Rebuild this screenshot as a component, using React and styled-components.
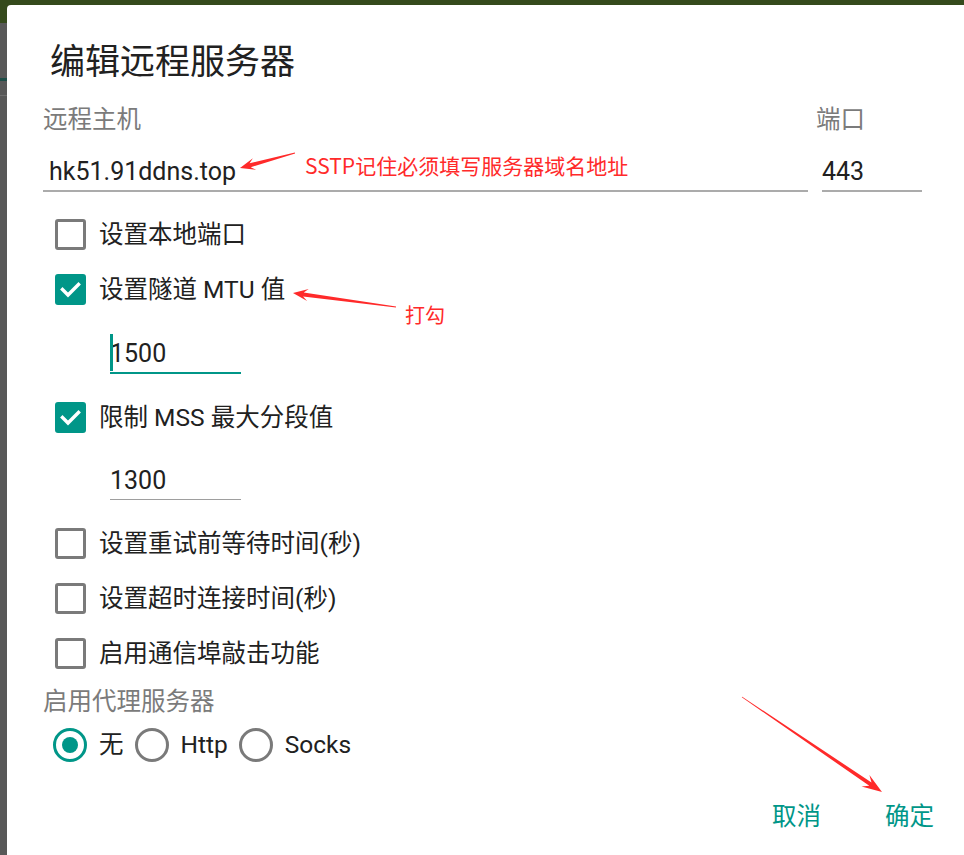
import React from 'react';
import styled, { createGlobalStyle } from 'styled-components';

const TEAL = '#009688';
const RED = '#ff2a2a';

const GlobalStyle = createGlobalStyle`
  html, body {
    margin: 0;
    padding: 0;
  }
  body {
    font-family: Roboto, "Noto Sans CJK SC", sans-serif;
    color: #212121;
  }
`;

// tapered "snipping tool" arrow, tail -> tip
function arrowPoints([tx, ty], [px, py], head = 16, wing = 6.5, neck = 2) {
  const dx = px - tx;
  const dy = py - ty;
  const len = Math.hypot(dx, dy);
  const ux = dx / len;
  const uy = dy / len;
  const nx = -uy;
  const ny = ux;
  const at = (d, w) => [px - ux * d + nx * w, py - uy * d + ny * w];
  const pts = [
    [tx + nx * 0.4, ty + ny * 0.4],
    at(head * 0.7, neck),
    at(head, wing),
    [px, py],
    at(head, -wing),
    at(head * 0.7, -neck),
    [tx - nx * 0.4, ty - ny * 0.4],
  ];
  return pts.map((p) => p.map((v) => v.toFixed(1)).join(',')).join(' ');
}

const arrows = [
  { from: [295, 153], to: [240, 168], head: 15, wing: 6 },
  { from: [396, 307], to: [293, 293], head: 15, wing: 6 },
  { from: [742, 697], to: [882, 792], head: 20, wing: 7 },
];

const checks = [
  { label: '设置本地端口', checked: false },
  { label: '设置隧道 MTU 值', checked: true, value: '1500', focused: true },
  { label: '限制 MSS 最大分段值', checked: true, value: '1300' },
  { label: '设置重试前等待时间(秒)', checked: false },
  { label: '设置超时连接时间(秒)', checked: false },
  { label: '启用通信埠敲击功能', checked: false },
];

const proxies = ['无', 'Http', 'Socks'];

function CheckMark() {
  return (
    <svg width="25" height="25" viewBox="0 0 25 25">
      <path d="M4.5 12.5 L10 18 L20.5 7.5" fill="none" stroke="#fff" strokeWidth="3.4" strokeLinecap="square" />
    </svg>
  );
}

export default function App() {
  return (
    <Page>
      <GlobalStyle />
      <Dialog>
        <Title>编辑远程服务器</Title>

        <HostRow>
          <Field>
            <FieldLabel>远程主机</FieldLabel>
            <FieldValue>hk51.91ddns.top</FieldValue>
          </Field>
          <Field>
            <FieldLabel>端口</FieldLabel>
            <FieldValue $inset>443</FieldValue>
          </Field>
        </HostRow>

        <CheckList>
          {checks.map((c) => (
            <React.Fragment key={c.label}>
              <CheckRow>
                <CheckBox $checked={c.checked}>{c.checked && <CheckMark />}</CheckBox>
                <RowLabel>{c.label}</RowLabel>
              </CheckRow>
              {c.value && (
                <SubInput $focused={c.focused}>
                  {c.focused && <Caret />}
                  {c.value}
                </SubInput>
              )}
            </React.Fragment>
          ))}
        </CheckList>

        <ProxyLabel>启用代理服务器</ProxyLabel>
        <RadioRow>
          {proxies.map((p, i) => (
            <RadioOption key={p}>
              <Radio $checked={i === 0} />
              <RowLabel>{p}</RowLabel>
            </RadioOption>
          ))}
        </RadioRow>

        <Actions>
          <ActionButton>取消</ActionButton>
          <ActionButton>确定</ActionButton>
        </Actions>
      </Dialog>

      <Note $x={305} $y={153} $size={21}>SSTP记住必须填写服务器域名地址</Note>
      <Note $x={405} $y={303} $size={20}>打勾</Note>
      <ArrowLayer width="964" height="855" viewBox="0 0 964 855">
        {arrows.map((a, i) => (
          <polygon key={i} points={arrowPoints(a.from, a.to, a.head, a.wing)} fill={RED} />
        ))}
      </ArrowLayer>
    </Page>
  );
}

const Page = styled.div`
  position: relative;
  width: 964px;
  height: 855px;
  overflow: hidden;
  background:
    linear-gradient(#354a1c, #354a1c) 0 0 / 100% 23px no-repeat,
    linear-gradient(#1d4d47, #1d4d47) 0 78px / 100% 3px no-repeat,
    linear-gradient(#6e6e6e, #6e6e6e) 0 95px / 100% 1px no-repeat,
    #585858;
`;

const Dialog = styled.div`
  box-sizing: border-box;
  margin: 5px 0 0 7px;
  height: 850px;
  padding: 0 30px 0 36px;
  background: #fff;
  border-top-left-radius: 4px;
  display: flex;
  flex-direction: column;
`;

const Title = styled.h1`
  margin: 36px 0 0;
  padding-left: 7px;
  font-size: 35px;
  line-height: 44px;
  font-weight: 400;
  color: #212121;
`;

const HostRow = styled.div`
  display: grid;
  grid-template-columns: 765px 106px;
  column-gap: 8px;
  margin-top: 20px;
`;

const Field = styled.div`
  display: flex;
  flex-direction: column;
`;

const FieldLabel = styled.div`
  font-size: 24.5px;
  line-height: 30px;
  color: #7b7b7b;
`;

const FieldValue = styled.div`
  margin-top: 19px;
  margin-left: ${(p) => (p.$inset ? '6px' : '0')};
  padding-left: ${(p) => (p.$inset ? '0' : '6px')};
  font-size: 25px;
  line-height: 36px;
  color: #212121;
  border-bottom: 2px solid #ababab;
`;

const CheckList = styled.div`
  display: flex;
  flex-direction: column;
  margin-top: 15px;
`;

const CheckRow = styled.div`
  display: flex;
  align-items: center;
  gap: 13px;
  height: 55px;
  padding-left: 12px;
`;

const CheckBox = styled.span`
  box-sizing: border-box;
  width: 31px;
  height: 31px;
  flex: none;
  display: flex;
  align-items: center;
  justify-content: center;
  border-radius: 3px;
  border: 3px solid ${(p) => (p.$checked ? TEAL : '#7a7a7a')};
  background: ${(p) => (p.$checked ? TEAL : 'transparent')};
`;

const RowLabel = styled.span`
  font-size: 24.5px;
  line-height: 30px;
  color: #212121;
`;

const SubInput = styled.div`
  position: relative;
  width: 131px;
  margin: ${(p) => (p.$focused ? '19px 0 16px 67px' : '18px 0 16px 67px')};
  font-size: 25px;
  line-height: 36px;
  color: #212121;
  border-bottom: ${(p) => (p.$focused ? `2px solid ${TEAL}` : '1.5px solid #9e9e9e')};
`;

const Caret = styled.span`
  position: absolute;
  left: 0;
  top: -2px;
  width: 3px;
  height: 37px;
  background: ${TEAL};
`;

const ProxyLabel = styled.div`
  margin-top: 6px;
  font-size: 24.5px;
  line-height: 30px;
  color: #7b7b7b;
`;

const RadioRow = styled.div`
  display: flex;
  align-items: center;
  gap: 11px;
  height: 44px;
  margin-top: 6px;
  padding-left: 10px;
`;

const RadioOption = styled.label`
  display: flex;
  align-items: center;
  gap: 12px;
`;

const Radio = styled.span`
  box-sizing: border-box;
  width: 34px;
  height: 34px;
  flex: none;
  display: flex;
  align-items: center;
  justify-content: center;
  border-radius: 50%;
  border: 3px solid ${(p) => (p.$checked ? TEAL : '#7a7a7a')};

  &::after {
    content: '';
    display: ${(p) => (p.$checked ? 'block' : 'none')};
    width: 16px;
    height: 16px;
    border-radius: 50%;
    background: ${TEAL};
  }
`;

const Actions = styled.div`
  display: flex;
  justify-content: flex-end;
  align-items: center;
  gap: 64px;
  height: 48px;
  margin-top: 26px;
`;

const ActionButton = styled.button`
  padding: 0;
  border: none;
  background: none;
  font-family: inherit;
  font-size: 24.5px;
  line-height: 30px;
  color: ${TEAL};
  cursor: pointer;
`;

const Note = styled.div`
  position: absolute;
  left: ${(p) => p.$x}px;
  top: ${(p) => p.$y}px;
  font-family: "Noto Sans CJK SC", sans-serif;
  font-size: ${(p) => p.$size}px;
  line-height: 24px;
  color: ${RED};
  white-space: nowrap;
`;

const ArrowLayer = styled.svg`
  position: absolute;
  inset: 0;
  pointer-events: none;
`;
